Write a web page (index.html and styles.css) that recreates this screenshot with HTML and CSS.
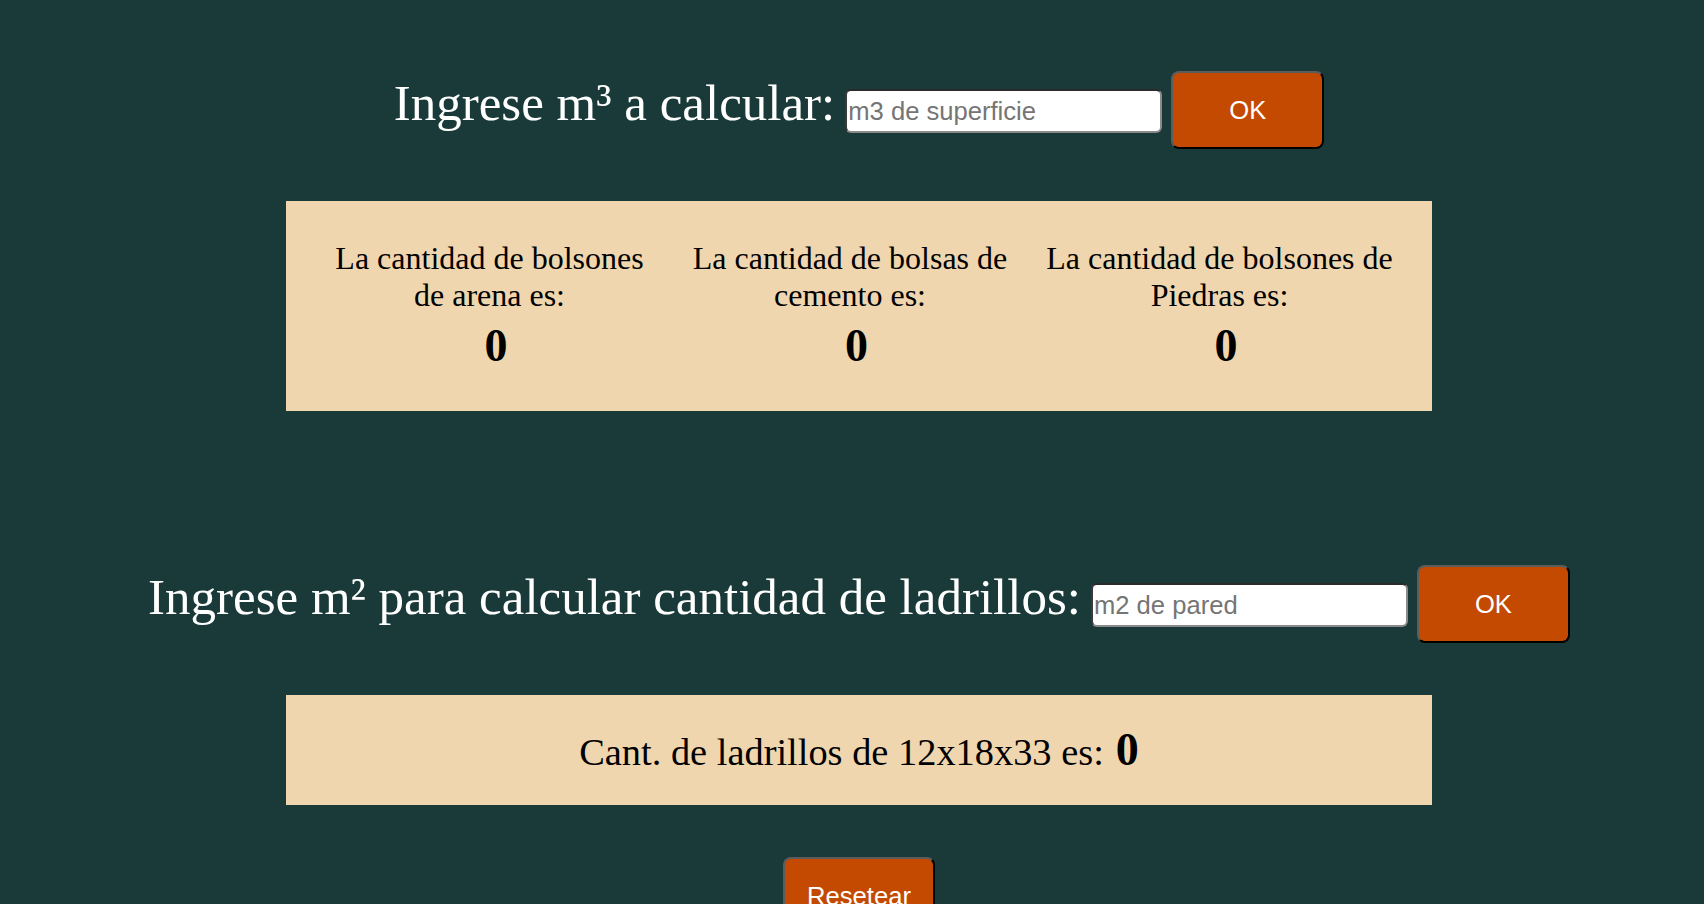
FILE: index.html
```html
<!DOCTYPE html>
<html lang="es">
<head>
<meta charset="utf-8">
<title>Calculadora de materiales</title>
<link rel="stylesheet" href="styles.css">
</head>
<body>
<main class="page">
  <section class="calc">
    <form class="entry">
      <label class="entry-label" for="m3">Ingrese m³ a calcular:</label>
      <input class="entry-input" id="m3" type="text" placeholder="m3 de superficie">
      <button class="btn btn-ok" type="button">OK</button>
    </form>
    <div class="result result-grid">
      <div class="result-col">
        <p class="result-text">La cantidad de bolsones de arena es:</p>
        <div class="result-num">0</div>
      </div>
      <div class="result-col">
        <p class="result-text">La cantidad de bolsas de cemento es:</p>
        <div class="result-num">0</div>
      </div>
      <div class="result-col">
        <p class="result-text">La cantidad de bolsones de Piedras es:</p>
        <div class="result-num">0</div>
      </div>
    </div>
  </section>

  <section class="calc calc-second">
    <form class="entry">
      <label class="entry-label" for="m2">Ingrese m² para calcular cantidad de ladrillos:</label>
      <input class="entry-input" id="m2" type="text" placeholder="m2 de pared">
      <button class="btn btn-ok" type="button">OK</button>
    </form>
    <div class="result result-single">
      <span class="single-text">Cant. de ladrillos de 12x18x33 es:</span>
      <span class="single-num">0</span>
    </div>
  </section>

  <div class="reset-wrap">
    <button class="btn btn-reset" type="button">Resetear</button>
  </div>
</main>
</body>
</html>
```

FILE: styles.css
```css
html, body {
  margin: 0;
  padding: 0;
}

body {
  background: #193a38;
  font-family: "Liberation Serif", "Times New Roman", serif;
  overflow: hidden;
}

.page {
  padding: 71px 0 0 14px;
}

.entry {
  display: flex;
  justify-content: center;
  align-items: flex-start;
  gap: 9px;
  margin: 0;
}

.entry-label {
  color: #ffffff;
  font-size: 51px;
  line-height: 58px;
  margin-top: 3px;
  margin-right: 1px;
}

.entry-input {
  box-sizing: border-box;
  width: 317px;
  height: 44px;
  margin-top: 18px;
  padding: 0 1px;
  font-family: "Liberation Sans", Arial, sans-serif;
  font-size: 25.6px;
  color: #222;
  background: #ffffff;
  border: 2px solid #767676;
  border-top-color: #2a2a2a;
  border-left-color: #3a3a3a;
  border-bottom-color: #8a8a8a;
  border-right-color: #8a8a8a;
  border-radius: 6px;
}

.entry-input::placeholder {
  color: #757575;
}

.btn {
  box-sizing: border-box;
  width: 153px;
  height: 78px;
  background: #c34a00;
  color: #ffffff;
  font-family: "Liberation Sans", Arial, sans-serif;
  font-size: 25.6px;
  border: 2px solid;
  border-color: #5c5c5c #000000 #000000 #5c5c5c;
  border-radius: 8px;
  cursor: pointer;
}

.result {
  box-sizing: border-box;
  width: 1146px;
  margin: 52px auto 0;
  background: #f0d6ae;
  color: #000000;
}

.result-grid {
  display: grid;
  grid-template-columns: 337px 342px 355px;
  column-gap: 21px;
  justify-content: center;
  padding: 39px 0 39px;
}

.result-col {
  text-align: center;
}

.result-text {
  margin: 0;
  font-size: 32px;
  line-height: 37px;
}

.result-num {
  margin-top: 5px;
  padding-left: 13px;
  font-size: 46px;
  font-weight: bold;
  line-height: 53px;
}

.calc-second {
  margin-top: 154px;
}

.result-single {
  height: 110px;
  display: flex;
  justify-content: center;
  align-items: baseline;
  gap: 12px;
  padding-top: 28px;
}

.single-text {
  font-size: 38.4px;
}

.single-num {
  font-size: 46px;
  font-weight: bold;
}

.reset-wrap {
  display: flex;
  justify-content: center;
  margin-top: 52px;
}

.btn-reset {
  width: 152px;
}
```
